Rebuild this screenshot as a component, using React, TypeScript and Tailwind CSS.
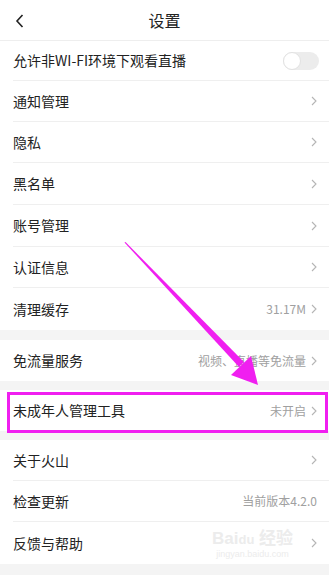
import React from 'react'

const font = { fontFamily: '"Noto Sans CJK SC", "Noto Sans", sans-serif' }

function Chevron() {
  return (
    <svg width="6" height="10" viewBox="0 0 6 10" className="ml-[5px]">
      <path d="M1 1l4 4-4 4" fill="none" stroke="#b5b5b5" strokeWidth="1.1" />
    </svg>
  )
}

function Row({
  label,
  value,
  divider = true,
  chevron = true,
  tall = false,
}: {
  label: string
  value?: string
  divider?: boolean
  chevron?: boolean
  tall?: boolean
}) {
  return (
    <div className="pl-[13px] bg-white">
      <div
        className={`${tall ? 'h-[42px]' : 'h-[41px]'} flex items-center justify-between pr-[12px] ${
          divider ? 'border-b border-[#efefef]' : ''
        }`}
      >
        <span className="text-[14px] text-[#222]">{label}</span>
        <div className="flex items-center">
          {value && <span className="text-[12px] text-[#a0a0a0]">{value}</span>}
          {chevron && <Chevron />}
        </div>
      </div>
    </div>
  )
}

export default function App() {
  return (
    <div className="relative w-[329px] h-[575px] overflow-hidden bg-[#f4f4f4]" style={font}>
      {/* Header */}
      <div className="h-[41px] bg-white flex items-center justify-center relative border-b border-[#eeeeee]">
        <svg width="10" height="14" viewBox="0 0 10 14" className="absolute left-[15px] top-[14px]">
          <path d="M7.5 1L2 7l5.5 6" fill="none" stroke="#222" strokeWidth="1.6" />
        </svg>
        <span className="text-[16px] text-[#222]">设置</span>
      </div>

      <div className="pl-[13px] bg-white">
        <div className="h-[40px] flex items-center justify-between pr-[10px] border-b border-[#efefef]">
          <span className="text-[14px] text-[#222]">允许非WI-FI环境下观看直播</span>
          <div className="w-[36px] h-[18px] rounded-full bg-[#ececec] relative">
            <div className="absolute left-0 top-0 w-[18px] h-[18px] rounded-full bg-white border border-[#e2e2e2]" />
          </div>
        </div>
      </div>
      <Row label="通知管理" />
      <Row label="隐私" />
      <Row label="黑名单" tall />
      <Row label="账号管理" tall />
      <Row label="认证信息" />
      <Row label="清理缓存" value="31.17M" divider={false} tall />

      <div className="h-[10px]" />
      <Row label="免流量服务" value="视频、直播等免流量" divider={false} />

      <div className="h-[9px]" />
      <Row label="未成年人管理工具" value="未开启" divider={false} />

      <div className="h-[9px]" />
      <Row label="关于火山" />
      <Row label="检查更新" value="当前版本4.2.0" chevron={false} />
      <Row label="反馈与帮助" divider={false} tall />

      {/* Highlight box */}
      <div className="absolute left-[7px] top-[392px] w-[321px] h-[41px] border-[3px] border-[#f01ff0] pointer-events-none" />

      {/* Watermark */}
      <div className="absolute left-[212px] top-[528px] flex flex-col items-center pointer-events-none">
        <span className="text-[17px] leading-[18px] font-bold text-[#ececec]" style={{ fontFamily: '"Liberation Sans", sans-serif' }}>
          Bai<span className="text-[13px]">du</span> <span style={font}>经验</span>
        </span>
        <span className="text-[9px] leading-[10px] text-[#ececec]" style={{ fontFamily: '"Liberation Sans", sans-serif' }}>
          jingyan.baidu.com
        </span>
      </div>

      {/* Arrow */}
      <svg className="absolute left-0 top-0 pointer-events-none" width="329" height="575" viewBox="0 0 329 575">
        <polygon points="124.5,242.5 125.5,242 244,362 239,367" fill="#f01ff0" />
        <polygon points="258,385 231,375 251,356" fill="#f01ff0" />
      </svg>
    </div>
  )
}
